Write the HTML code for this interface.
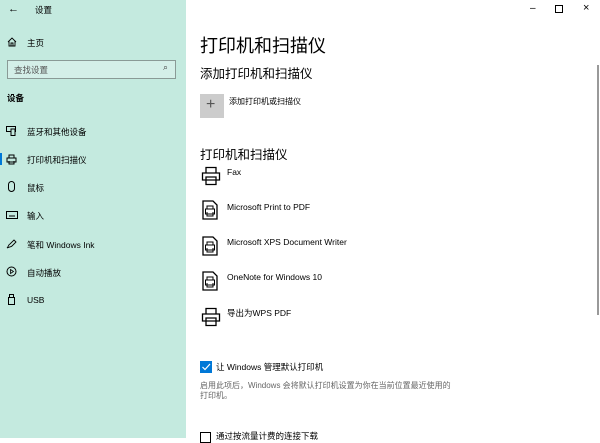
<!DOCTYPE html>
<html><head><meta charset="utf-8"><style>
*{margin:0;padding:0;box-sizing:border-box}
body{width:600px;height:438px;overflow:hidden;background:#fff;font-family:"Liberation Sans","Noto Sans CJK SC",sans-serif;color:#000;position:relative}
.side{position:absolute;left:0;top:0;width:186px;height:438px;background:#c4eadf}
.a{position:absolute;white-space:nowrap}
.s{font-size:8.5px}
.ic{position:absolute}
</style></head><body>
<div class="side">
<div class="a" style="left:8px;top:3px;font-size:11px">←</div>
<div class="a s" style="left:35px;top:4px">设置</div>
<svg class="ic" style="left:7px;top:37px" width="10" height="10" viewBox="0 0 10 10"><path d="M1 5 L5 1 L9 5 M2 4 V9 H8 V4 M4 9 V6 H6 V9" fill="none" stroke="#000" stroke-width="0.9"/></svg>
<div class="a s" style="left:27px;top:37px">主页</div>
<div class="a" style="left:7px;top:60px;width:169px;height:19px;border:1px solid #8a9a96;background:#d4efe8"></div>
<div class="a s" style="left:14px;top:64px;color:#555">查找设置</div>
<div class="a" style="left:163px;top:62px;font-size:9px;color:#444">⌕</div>
<div class="a s" style="left:7px;top:92px;font-weight:bold">设备</div>
<div class="a" style="left:0;top:153px;width:2px;height:12px;background:#0078d7"></div>
<svg class="ic" style="left:6px;top:126px" width="10" height="10"><rect x="0.5" y="0.5" width="9" height="5" fill="none" stroke="#000"/><rect x="5" y="3" width="4" height="6.5" fill="#c4eadf" stroke="#000"/></svg>
<div class="a s" style="left:27px;top:126px">蓝牙和其他设备</div>
<svg class="ic" style="left:6px;top:154px" width="11" height="11"><path d="M3 4V1H8V4M1 4H10V8H1ZM3 7V10H8V7" fill="none" stroke="#000"/></svg>
<div class="a s" style="left:27px;top:154px">打印机和扫描仪</div>
<svg class="ic" style="left:8px;top:181px" width="7" height="11"><rect x="0.5" y="0.5" width="6" height="10" rx="3" fill="none" stroke="#000"/></svg>
<div class="a s" style="left:27px;top:182px">鼠标</div>
<svg class="ic" style="left:6px;top:211px" width="12" height="8"><rect x="0.5" y="0.5" width="11" height="7" fill="none" stroke="#000"/><path d="M3 5H9" stroke="#000"/></svg>
<div class="a s" style="left:27px;top:210px">输入</div>
<svg class="ic" style="left:6px;top:238px" width="11" height="11"><path d="M1 10C3 8 2 7 4 6L8 2L10 4L6 8C5 9 3 9 1 10Z" fill="none" stroke="#000" stroke-width="0.9"/></svg>
<div class="a s" style="left:27px;top:239px">笔和 Windows Ink</div>
<svg class="ic" style="left:6px;top:266px" width="11" height="11"><circle cx="5.5" cy="5.5" r="4.5" fill="none" stroke="#000"/><path d="M4.5 3.5V7.5L7.5 5.5Z" fill="none" stroke="#000" stroke-width="0.8"/></svg>
<div class="a s" style="left:27px;top:267px">自动播放</div>
<svg class="ic" style="left:8px;top:294px" width="7" height="11"><rect x="0.5" y="3.5" width="6" height="7" fill="none" stroke="#000"/><rect x="1.5" y="0.5" width="4" height="3" fill="none" stroke="#000"/></svg>
<div class="a s" style="left:27px;top:295px">USB</div>
</div>
<div class="a" style="left:530px;top:3px;font-size:10px">–</div>
<div class="a" style="left:555px;top:5px;width:8px;height:8px;border:1px solid #000"></div>
<div class="a" style="left:583px;top:2px;font-size:11px">×</div>
<div class="a" style="left:597px;top:65px;width:2px;height:250px;background:#999"></div>
<div class="a" style="left:200px;top:32px;font-size:18px">打印机和扫描仪</div>
<div class="a" style="left:200px;top:63px;font-size:12.5px">添加打印机和扫描仪</div>
<div class="a" style="left:200px;top:94px;width:24px;height:24px;background:#ccc"></div>
<div class="a" style="left:206px;top:96px;font-size:16px;color:#555;font-weight:300">+</div>
<div class="a" style="left:229px;top:96px;font-size:8px">添加打印机或扫描仪</div>
<div class="a" style="left:200px;top:144px;font-size:12.5px">打印机和扫描仪</div>
<svg class="ic" style="left:201px;top:166px" width="20" height="20"><path d="M5 7V1.5H15V7M1.5 7H18.5V14H1.5ZM5 11V18.5H15V11Z" fill="#fff" stroke="#000" stroke-width="1.3"/></svg>
<div class="a s" style="left:227px;top:167px">Fax</div>
<svg class="ic" style="left:202px;top:200px" width="16" height="20"><path d="M1 1H11L15 5V19H1Z" fill="none" stroke="#000" stroke-width="1.3"/><path d="M5 9V6H11V9M3.5 9H12.5V14H3.5ZM5 12V16H11V12" fill="none" stroke="#000"/></svg>
<div class="a s" style="left:227px;top:202px">Microsoft Print to PDF</div>
<svg class="ic" style="left:202px;top:236px" width="16" height="20"><path d="M1 1H11L15 5V19H1Z" fill="none" stroke="#000" stroke-width="1.3"/><path d="M5 9V6H11V9M3.5 9H12.5V14H3.5ZM5 12V16H11V12" fill="none" stroke="#000"/></svg>
<div class="a s" style="left:227px;top:237px">Microsoft XPS Document Writer</div>
<svg class="ic" style="left:202px;top:271px" width="16" height="20"><path d="M1 1H11L15 5V19H1Z" fill="none" stroke="#000" stroke-width="1.3"/><path d="M5 9V6H11V9M3.5 9H12.5V14H3.5ZM5 12V16H11V12" fill="none" stroke="#000"/></svg>
<div class="a s" style="left:227px;top:272px">OneNote for Windows 10</div>
<svg class="ic" style="left:201px;top:307px" width="20" height="20"><path d="M5 7V1.5H15V7M1.5 7H18.5V14H1.5ZM5 11V18.5H15V11Z" fill="#fff" stroke="#000" stroke-width="1.3"/></svg>
<div class="a s" style="left:227px;top:307px">导出为WPS PDF</div>
<div class="a" style="left:200px;top:361px;width:12px;height:12px;background:#0078d7"></div>
<svg class="ic" style="left:200px;top:361px" width="12" height="12"><path d="M2.5 6L5 8.5L10 3" fill="none" stroke="#fff" stroke-width="1.2"/></svg>
<div class="a s" style="left:216px;top:361px">让 Windows 管理默认打印机</div>
<div class="a" style="left:200px;top:380px;font-size:8px;color:#666">启用此项后，Windows 会将默认打印机设置为你在当前位置最近使用的</div>
<div class="a" style="left:200px;top:390px;font-size:8px;color:#666">打印机。</div>
<div class="a" style="left:200px;top:432px;width:11px;height:11px;border:1px solid #000"></div>
<div class="a s" style="left:216px;top:430px">通过按流量计费的连接下载</div>
</body></html>
